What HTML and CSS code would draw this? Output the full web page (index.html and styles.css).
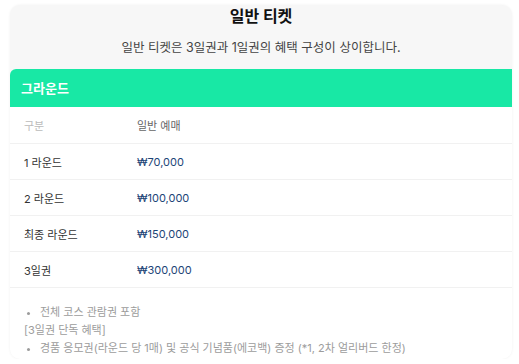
FILE: index.html
```html
<!DOCTYPE html>
<html lang="ko">
<head>
  <meta charset="UTF-8">
  <meta name="viewport" content="width=device-width, initial-scale=1.0">
  <title>일반 티켓</title>
  <link rel="stylesheet" href="styles.css">
</head>
<body>
  <div class="ticket-panel">
    <h2 class="ticket-title">일반 티켓</h2>
    <p class="ticket-desc">일반 티켓은 3일권과 1일권의 혜택 구성이 상이합니다.</p>

    <div class="price-card">
      <div class="price-card-head">그라운드</div>

      <div class="price-row price-row-head">
        <div class="cell-name">구분</div>
        <div class="cell-price">일반 예매</div>
      </div>
      <div class="price-row">
        <div class="cell-name">1 라운드</div>
        <div class="cell-price">₩70,000</div>
      </div>
      <div class="price-row">
        <div class="cell-name">2 라운드</div>
        <div class="cell-price">₩100,000</div>
      </div>
      <div class="price-row">
        <div class="cell-name">최종 라운드</div>
        <div class="cell-price">₩150,000</div>
      </div>
      <div class="price-row">
        <div class="cell-name">3일권</div>
        <div class="cell-price">₩300,000</div>
      </div>

      <!-- 혜택 안내 -->
      <div class="price-notes">
        <ul>
          <li>전체 코스 관람권 포함</li>
        </ul>
        <div class="notes-label">[3일권 단독 혜택]</div>
        <ul>
          <li>경품 응모권(라운드 당 1매) 및 공식 기념품(에코백) 증정 (*1, 2차 얼리버드 한정)</li>
        </ul>
      </div>
    </div>
  </div>
</body>
</html>
```

FILE: styles.css
```css
* {
  box-sizing: border-box;
}

body {
  margin: 0;
  padding: 5px 7px 0 10px;
  font-family: 'Inter', 'Noto Sans CJK KR', sans-serif;
  background: #ffffff;
  color: #333;
}

.ticket-panel {
  background: #f7f7f7;
  border-radius: 10px;
  overflow: hidden;
  box-shadow: 0 0 3px rgba(0,0,0,0.06);
}

.ticket-title {
  margin: 0;
  padding-top: 1px;
  text-align: center;
  font-size: 16px;
  line-height: 20px;
  font-weight: 700;
  color: #111;
}

.ticket-desc {
  margin: 13px 0 12px;
  text-align: center;
  font-size: 12.5px;
  line-height: 18px;
  color: #444;
}

.price-card {
  background: #ffffff;
  border-radius: 6px 0 0 0;
  overflow: hidden;
}

.price-card-head {
  background: #18e8a5;
  color: #fff;
  font-size: 13px;
  font-weight: 700;
  height: 38px;
  line-height: 38px;
  padding: 0 11px;
}

.price-row {
  display: grid;
  grid-template-columns: 113px 1fr;
  align-items: center;
  height: 36px;
  padding-left: 14px;
  border-bottom: 1px solid #f1f1f1;
  font-size: 11px;
}

.price-row-head {
  height: 37px;
}

.price-row-head .cell-name {
  color: #bbb;
}

.price-row-head .cell-price {
  color: #666;
}

.cell-name {
  color: #333;
}

.cell-price {
  color: #1d4577;
}

.price-notes {
  padding: 15px 14px 2px;
  font-size: 11px;
  line-height: 18px;
  color: #9c9c9c;
}

.price-notes ul {
  margin: 0;
  padding-left: 16px;
}

.price-notes li::marker {
  font-size: 10px;
}
```
